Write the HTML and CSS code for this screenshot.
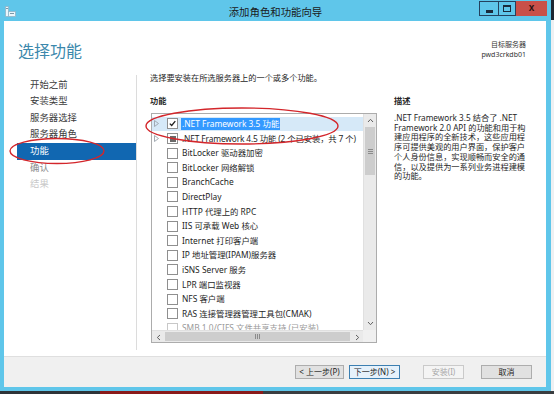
FILE: index.html
```html
<!DOCTYPE html>
<html lang="zh-CN">
<head>
  <meta charset="UTF-8">
  <title>添加角色和功能向导</title>
  <link rel="stylesheet" href="styles.css">
</head>
<body>
  <div class="screen">
    <div class="window">
      <!-- 标题栏 -->
      <div class="titlebar">
        <svg class="app-icon" width="11" height="11" viewBox="0 0 11 11">
          <rect x="0.5" y="0.5" width="3" height="10" fill="#eaf6fc" stroke="#8fb5c8" stroke-width="0.8"/>
          <rect x="3.5" y="5.5" width="7" height="5" fill="#eaf6fc" stroke="#8fb5c8" stroke-width="0.8"/>
          <line x1="5" y1="7.5" x2="9" y2="7.5" stroke="#5d7f92" stroke-width="0.8"/>
          <line x1="1" y1="2.5" x2="3" y2="2.5" stroke="#5d7f92" stroke-width="0.8"/>
        </svg>
        <div class="title">添加角色和功能向导</div>
        <div class="controls">
          <span class="ctl ctl-min"><i></i></span>
          <span class="ctl ctl-max"><i></i></span>
          <span class="ctl ctl-close">x</span>
        </div>
      </div>

      <div class="client">
        <div class="wizard-head">
          <h1>选择功能</h1>
          <div class="target">
            <div>目标服务器</div>
            <div>pwd3crkdb01</div>
          </div>
        </div>

        <div class="wizard-body">
          <!-- 左侧步骤 -->
          <ul class="steps">
            <li>开始之前</li>
            <li>安装类型</li>
            <li>服务器选择</li>
            <li>服务器角色</li>
            <li class="current">功能</li>
            <li class="pending">确认</li>
            <li class="disabled">结果</li>
          </ul>

          <div class="page">
            <p class="intro">选择要安装在所选服务器上的一个或多个功能。</p>
            <div class="columns">
              <div class="features">
                <div class="label">功能</div>
                <div class="listbox">
                  <div class="items">
                    <div class="row selected">
                      <span class="expander"><svg width="5" height="7" viewBox="0 0 5 7"><path d="M0.5 0.5 L4.5 3.5 L0.5 6.5 Z" fill="none" stroke="#9aa3ab" stroke-width="0.9"/></svg></span>
                      <span class="check checked"><svg width="9" height="9" viewBox="0 0 9 9"><path d="M1.8 4.6 L3.7 6.5 L7.3 2.2" fill="none" stroke="#1e1e1e" stroke-width="1.3"/></svg></span>
                      <span class="text">.NET Framework 3.5 功能</span>
                    </div>
                    <div class="row">
                      <span class="expander"><svg width="5" height="7" viewBox="0 0 5 7"><path d="M0.5 0.5 L4.5 3.5 L0.5 6.5 Z" fill="none" stroke="#9aa3ab" stroke-width="0.9"/></svg></span>
                      <span class="check partial"></span>
                      <span class="text tight">.NET Framework 4.5 功能 (2 个已安装，共 7 个)</span>
                    </div>
                    <div class="row"><span class="expander"></span><span class="check"></span><span class="text">BitLocker 驱动器加密</span></div>
                    <div class="row"><span class="expander"></span><span class="check"></span><span class="text">BitLocker 网络解锁</span></div>
                    <div class="row"><span class="expander"></span><span class="check"></span><span class="text">BranchCache</span></div>
                    <div class="row"><span class="expander"></span><span class="check"></span><span class="text">DirectPlay</span></div>
                    <div class="row"><span class="expander"></span><span class="check"></span><span class="text">HTTP 代理上的 RPC</span></div>
                    <div class="row"><span class="expander"></span><span class="check"></span><span class="text">IIS 可承载 Web 核心</span></div>
                    <div class="row"><span class="expander"></span><span class="check"></span><span class="text">Internet 打印客户端</span></div>
                    <div class="row"><span class="expander"></span><span class="check"></span><span class="text">IP 地址管理(IPAM)服务器</span></div>
                    <div class="row"><span class="expander"></span><span class="check"></span><span class="text">iSNS Server 服务</span></div>
                    <div class="row"><span class="expander"></span><span class="check"></span><span class="text">LPR 端口监视器</span></div>
                    <div class="row"><span class="expander"></span><span class="check"></span><span class="text">NFS 客户端</span></div>
                    <div class="row"><span class="expander"></span><span class="check"></span><span class="text">RAS 连接管理器管理工具包(CMAK)</span></div>
                    <div class="row installed"><span class="expander"></span><span class="check"></span><span class="text">SMB 1.0/CIFS 文件共享支持 (已安装)</span></div>
                  </div>

                  <div class="vscroll">
                    <span class="sbtn"><svg width="7" height="5" viewBox="0 0 7 5"><path d="M1 4 L3.5 1.3 L6 4" fill="none" stroke="#606060" stroke-width="1"/></svg></span>
                    <span class="vthumb"><svg width="5" height="5" viewBox="0 0 5 5"><path d="M0 0.5 H5 M0 2.5 H5 M0 4.5 H5" stroke="#7a7a7a" stroke-width="0.8"/></svg></span>
                    <span class="track"></span>
                    <span class="sbtn"><svg width="7" height="5" viewBox="0 0 7 5"><path d="M1 1 L3.5 3.7 L6 1" fill="none" stroke="#606060" stroke-width="1"/></svg></span>
                  </div>
                  <div class="hscroll">
                    <span class="sbtn"><svg width="5" height="7" viewBox="0 0 5 7"><path d="M4 1 L1.3 3.5 L4 6" fill="none" stroke="#606060" stroke-width="1"/></svg></span>
                    <span class="hthumb"><svg width="5" height="5" viewBox="0 0 5 5"><path d="M0.5 0 V5 M2.5 0 V5 M4.5 0 V5" stroke="#7a7a7a" stroke-width="0.8"/></svg></span>
                    <span class="sbtn"><svg width="5" height="7" viewBox="0 0 5 7"><path d="M1 1 L3.7 3.5 L1 6" fill="none" stroke="#606060" stroke-width="1"/></svg></span>
                  </div>
                  <div class="corner"></div>
                </div>
              </div>

              <div class="desc">
                <div class="label">描述</div>
                <p>.NET Framework 3.5 结合了 .NET<br>Framework 2.0 API 的功能和用于构<br>建应用程序的全新技术，这些应用程<br>序可提供美观的用户界面，保护客户<br>个人身份信息，实现顺畅而安全的通<br>信，以及提供为一系列业务进程建模<br>的功能。</p>
              </div>
            </div>
          </div>
        </div>

        <div class="wizard-foot">
          <button class="btn btn-prev">&lt; 上一步(P)</button>
          <button class="btn btn-next">下一步(N) &gt;</button>
          <button class="btn btn-install" disabled>安装(I)</button>
          <button class="btn btn-cancel">取消</button>
        </div>
      </div>
    </div>
    <div class="side">
      <div class="side-top"></div>
      <div class="side-rest"></div>
    </div>
  </div>
  <div class="taskbar">
    <span class="tb-a"></span>
    <span class="tb-b"></span>
    <span class="tb-c"></span>
  </div>

  <!-- 截图上的红色标注圈 -->
  <svg class="marks" width="554" height="394" viewBox="0 0 554 394">
    <ellipse cx="57" cy="151" rx="47" ry="12.5" fill="none" stroke="#d3262b" stroke-width="1.4"/>
    <ellipse cx="242" cy="126" rx="96" ry="18" fill="none" stroke="#d3262b" stroke-width="1.4"/>
  </svg>
</body>
</html>
```

FILE: styles.css
```css
* {
  box-sizing: border-box;
}

body {
  margin: 0;
  width: 554px;
  height: 394px;
  overflow: hidden;
  position: relative;
  background: #2b2b2b;
  font-family: "Noto Sans", "Noto Sans CJK SC", sans-serif;
  color: #1e1e1e;
}

.screen {
  display: flex;
  height: 391px;
}

/* 窗口外框 */
.window {
  width: 551px;
  background: #5fc6ea;
  display: flex;
  flex-direction: column;
}

.side {
  flex: 1;
  display: flex;
  flex-direction: column;
}

.side-top {
  height: 20px;
  background: #1d2733;
}

.side-rest {
  flex: 1;
  background: #eef0f2;
}

.taskbar {
  height: 3px;
  display: flex;
}

.tb-a {
  width: 100px;
  background: #2e3338;
}

.tb-b {
  width: 163px;
  background: #8a1a1a;
}

.tb-c {
  flex: 1;
  background: #3a3d40;
}

/* 标题栏 */
.titlebar {
  height: 21px;
  display: grid;
  grid-template-columns: 1fr auto 1fr;
  align-items: center;
}

.app-icon {
  margin-left: 5px;
  margin-top: 1px;
}

.title {
  font-family: "Noto Sans CJK SC", sans-serif;
  font-size: 10.4px;
  color: #1a1a1a;
  padding-top: 1px;
}

.controls {
  justify-self: end;
  align-self: start;
  display: flex;
  margin-top: 1px;
  margin-right: 4px;
}

.ctl {
  height: 15px;
  display: flex;
  align-items: center;
  justify-content: center;
}

.ctl-min {
  width: 19px;
  border: 1px solid #24415e;
  border-right: none;
}

.ctl-min i {
  width: 7px;
  height: 3px;
  background: #1a2b3c;
  margin-top: 5px;
}

.ctl-max {
  width: 18px;
  border: 1px solid #24415e;
}

.ctl-max i {
  width: 8px;
  height: 7px;
  border: 1px solid #1a2b3c;
  border-top-width: 2px;
}

.ctl-close {
  width: 31px;
  background: #c85049;
  color: #2a1010;
  font-family: "Liberation Sans", sans-serif;
  font-weight: bold;
  font-size: 10px;
  line-height: 1;
  padding-bottom: 2px;
}

/* 客户区 */
.client {
  flex: 1;
  margin: 0 5px 4px 4px;
  background: #fff;
  display: flex;
  flex-direction: column;
}

.wizard-head {
  height: 50px;
  display: flex;
  justify-content: space-between;
  align-items: flex-start;
  padding: 19px 20px 0 14px;
}

.wizard-head h1 {
  margin: 0;
  font-family: "Noto Sans CJK SC", sans-serif;
  font-weight: normal;
  font-size: 16px;
  line-height: 20px;
  color: #3b88ac;
}

.target {
  text-align: right;
  font-size: 7px;
  line-height: 10px;
  color: #333;
}

.wizard-body {
  flex: 1;
  display: flex;
}

/* 步骤导航 */
.steps {
  list-style: none;
  width: 133px;
  margin: 4px 0 6px;
  padding: 1.7px 0 0;
  border-right: 1px solid #dcdcdc;
}

.steps li {
  height: 16.6px;
  line-height: 16.6px;
  margin-left: 13px;
  padding-left: 13px;
  font-size: 9.4px;
  color: #3c3c3c;
}

.steps li.current {
  background: #1167b1;
  color: #fff;
}

.steps li.pending {
  color: #8a8a8a;
}

.steps li.disabled {
  color: #c8c8c8;
}

/* 功能页 */
.page {
  flex: 1;
  padding: 1px 0 0 13px;
}

.intro {
  margin: 0;
  font-size: 8.2px;
  line-height: 12px;
  color: #262626;
}

.columns {
  display: flex;
  margin-top: 11px;
}

.label {
  font-size: 8.2px;
  line-height: 12px;
  font-weight: bold;
  color: #262626;
}

.features {
  width: 227px;
}

.listbox {
  margin: 6px 0 0 1px;
  width: 226px;
  height: 230px;
  border: 1px solid #acacac;
  display: grid;
  grid-template-columns: 1fr 13px;
  grid-template-rows: 1fr 12px;
}

.items {
  overflow: hidden;
  padding-top: 2.7px;
}

.row {
  height: 14.6px;
  display: flex;
  align-items: center;
  white-space: nowrap;
  font-size: 8.4px;
  color: #1e1e1e;
}

.row.selected {
  background: #d6e9f8;
}

.row.installed {
  color: #9a9a9a;
}

.expander {
  width: 15px;
  display: flex;
  padding-left: 2px;
}

.check {
  width: 11px;
  height: 11px;
  flex: none;
  border: 1px solid #8f8f8f;
  background: #fff;
  margin-right: 3px;
  display: flex;
  align-items: center;
  justify-content: center;
}

.check.partial::after {
  content: "";
  width: 6px;
  height: 6px;
  background: #6a6a6a;
}

.row.installed .check {
  border-color: #c8c8c8;
}

.text {
  padding: 0 1px;
  line-height: 12px;
}

.text.tight {
  letter-spacing: -0.15px;
}

.row.selected .text {
  background: #3399ff;
  color: #fff;
}

/* 滚动条 */
.vscroll {
  display: flex;
  flex-direction: column;
  background: #eaeaea;
  border-left: 1px solid #e0e0e0;
}

.hscroll {
  display: flex;
  background: #eaeaea;
  border-top: 1px solid #e0e0e0;
}

.corner {
  background: #f0f0f0;
}

.sbtn {
  flex: none;
  width: 12px;
  height: 12px;
  display: flex;
  align-items: center;
  justify-content: center;
}

.vscroll .sbtn {
  height: 13px;
  width: auto;
}

.vthumb {
  height: 48px;
  margin: 0 1px;
  background: #cdcdcd;
  display: flex;
  align-items: center;
  justify-content: center;
}

.track {
  flex: 1;
}

.hthumb {
  flex: 1;
  margin: 1px;
  background: #cdcdcd;
  display: flex;
  align-items: center;
  justify-content: center;
}

/* 描述 */
.desc {
  margin-left: 17px;
  width: 146px;
}

.desc p {
  margin: 6px 0 0;
  font-size: 8.2px;
  line-height: 9.7px;
  color: #262626;
  white-space: nowrap;
}

/* 底部按钮 */
.wizard-foot {
  height: 31px;
  background: #f0f0f0;
  border-top: 1px solid #dfdfdf;
  display: flex;
  justify-content: flex-end;
  align-items: center;
  padding: 0 14px 1px 0;
}

.btn {
  height: 14px;
  padding: 0;
  font-family: "Noto Sans", "Noto Sans CJK SC", sans-serif;
  font-size: 8px;
  line-height: 12px;
  border: 1px solid #adadad;
  background: #e1e1e1;
  color: #1e1e1e;
}

.btn-prev {
  width: 49px;
  margin-right: 5px;
}

.btn-next {
  width: 51px;
  margin-right: 23px;
  border-color: #3c7fb1;
  background: #e5f1fb;
}

.btn-install {
  width: 41px;
  margin-right: 17px;
  border-color: #cacaca;
  background: #f4f4f4;
  color: #a8a8a8;
}

.btn-cancel {
  width: 51px;
}

.marks {
  position: absolute;
  left: 0;
  top: 0;
  pointer-events: none;
}
```
